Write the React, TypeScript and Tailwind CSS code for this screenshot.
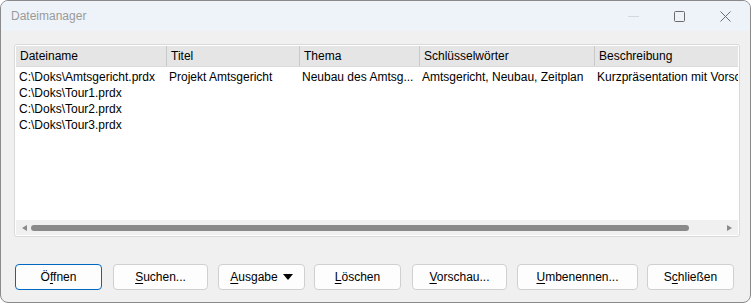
import React from "react";

interface Column {
  title: string;
  width: number;
}

const columns: Column[] = [
  { title: "Dateiname", width: 150 },
  { title: "Titel", width: 133 },
  { title: "Thema", width: 120 },
  { title: "Schlüsselwörter", width: 175 },
  { title: "Beschreibung", width: 200 },
];

const rows: string[][] = [
  [
    "C:\\Doks\\Amtsgericht.prdx",
    "Projekt Amtsgericht",
    "Neubau des Amtsg...",
    "Amtsgericht, Neubau, Zeitplan",
    "Kurzpräsentation mit Vorschau der Planung",
  ],
  ["C:\\Doks\\Tour1.prdx", "", "", "", ""],
  ["C:\\Doks\\Tour2.prdx", "", "", "", ""],
  ["C:\\Doks\\Tour3.prdx", "", "", "", ""],
];

function Btn(props: {
  width: string;
  pre: string;
  key_: string;
  post: string;
  primary?: boolean;
  arrow?: boolean;
}) {
  return (
    <button
      className={
        props.width +
        " h-[26px] rounded-[4px] bg-[#fdfdfd] text-[12px] text-black flex items-center justify-center " +
        (props.primary
          ? "border border-[#0067c0]"
          : "border border-[#d0d0d0]")
      }
    >
      <span>
        {props.pre}
        <span className="underline underline-offset-2">{props.key_}</span>
        {props.post}
      </span>
      {props.arrow && (
        <svg width="10" height="6" viewBox="0 0 10 6" className="ml-[5px]">
          <polygon points="0,0 10,0 5,6" fill="#000" />
        </svg>
      )}
    </button>
  );
}

export default function App() {
  return (
    <div
      className="w-[751px] h-[303px] bg-[#f0f0f0] border border-[#8a8a8a] rounded-[8px] overflow-hidden flex flex-col"
      style={{ fontFamily: '"Liberation Sans", Arial, sans-serif' }}
    >
      {/* title bar */}
      <div className="h-[30px] shrink-0 bg-[#eef3f9] flex items-center">
        <div className="pl-[10px] text-[12px] text-[#9a9a9a] flex-1">
          Dateimanager
        </div>
        <div className="flex items-center h-full">
          <div className="w-[46px] flex justify-center">
            <svg width="11" height="11" viewBox="0 0 11 11">
              <line x1="0" y1="5.5" x2="11" y2="5.5" stroke="#d4d7db" strokeWidth="1" />
            </svg>
          </div>
          <div className="w-[46px] flex justify-center">
            <svg width="11" height="11" viewBox="0 0 11 11">
              <rect x="0.5" y="0.5" width="10" height="10" rx="1" fill="none" stroke="#6b6b6b" strokeWidth="1" />
            </svg>
          </div>
          <div className="w-[46px] flex justify-center mr-[2px]">
            <svg width="11" height="11" viewBox="0 0 11 11">
              <path d="M0.5 0.5 L10.5 10.5 M10.5 0.5 L0.5 10.5" stroke="#6b6b6b" strokeWidth="1" />
            </svg>
          </div>
        </div>
      </div>

      {/* list view */}
      <div className="ml-[13px] mt-[13px] w-[726px] h-[193px] bg-white border border-[#d9d9d9] rounded-[3px] p-px flex flex-col overflow-hidden">
        <div className="h-[21px] shrink-0 bg-[#e5e5e5] border-b border-[#dadada] flex overflow-hidden">
          {columns.map((c, i) => (
            <div
              key={c.title}
              className={
                "shrink-0 h-full flex items-center pl-[4px] text-[12px] text-black whitespace-nowrap " +
                (i > 0 ? "border-l border-[#c9c9c9]" : "")
              }
              style={{ width: c.width }}
            >
              {c.title}
            </div>
          ))}
        </div>
        <div className="flex-1 pt-[2px] overflow-hidden">
          {rows.map((r, ri) => (
            <div key={ri} className="h-[16px] flex">
              {r.map((cell, ci) => (
                <div
                  key={ci}
                  className="shrink-0 pl-[3px] text-[12px] leading-[16px] text-black whitespace-nowrap overflow-hidden"
                  style={{ width: columns[ci].width }}
                >
                  {cell}
                </div>
              ))}
            </div>
          ))}
        </div>
        {/* horizontal scrollbar */}
        <div className="h-[15px] shrink-0 bg-[#f0f0f0] flex items-center px-[6px]">
          <svg width="5" height="6" viewBox="0 0 5 6">
            <polygon points="5,0 5,6 0,3" fill="#8a8a8a" />
          </svg>
          <div className="ml-[4px] w-[658px] h-[6px] rounded-full bg-[#8a8a8a]" />
          <div className="flex-1" />
          <svg width="5" height="6" viewBox="0 0 5 6">
            <polygon points="0,0 0,6 5,3" fill="#8a8a8a" />
          </svg>
        </div>
      </div>

      {/* buttons */}
      <div className="mt-[27px] ml-[14px] flex">
        <Btn width="w-[87px]" pre="Ö" key_="f" post="fnen" primary />
        <div className="w-[11px]" />
        <Btn width="w-[95px]" pre="" key_="S" post="uchen..." />
        <div className="w-[10px]" />
        <Btn width="w-[87px]" pre="" key_="A" post="usgabe" arrow />
        <div className="w-[9px]" />
        <Btn width="w-[87px]" pre="" key_="L" post="öschen" />
        <div className="w-[11px]" />
        <Btn width="w-[95px]" pre="" key_="V" post="orschau..." />
        <div className="w-[10px]" />
        <Btn width="w-[121px]" pre="" key_="U" post="mbenennen..." />
        <div className="w-[9px]" />
        <Btn width="w-[87px]" pre="S" key_="c" post="hließen" />
      </div>
    </div>
  );
}
